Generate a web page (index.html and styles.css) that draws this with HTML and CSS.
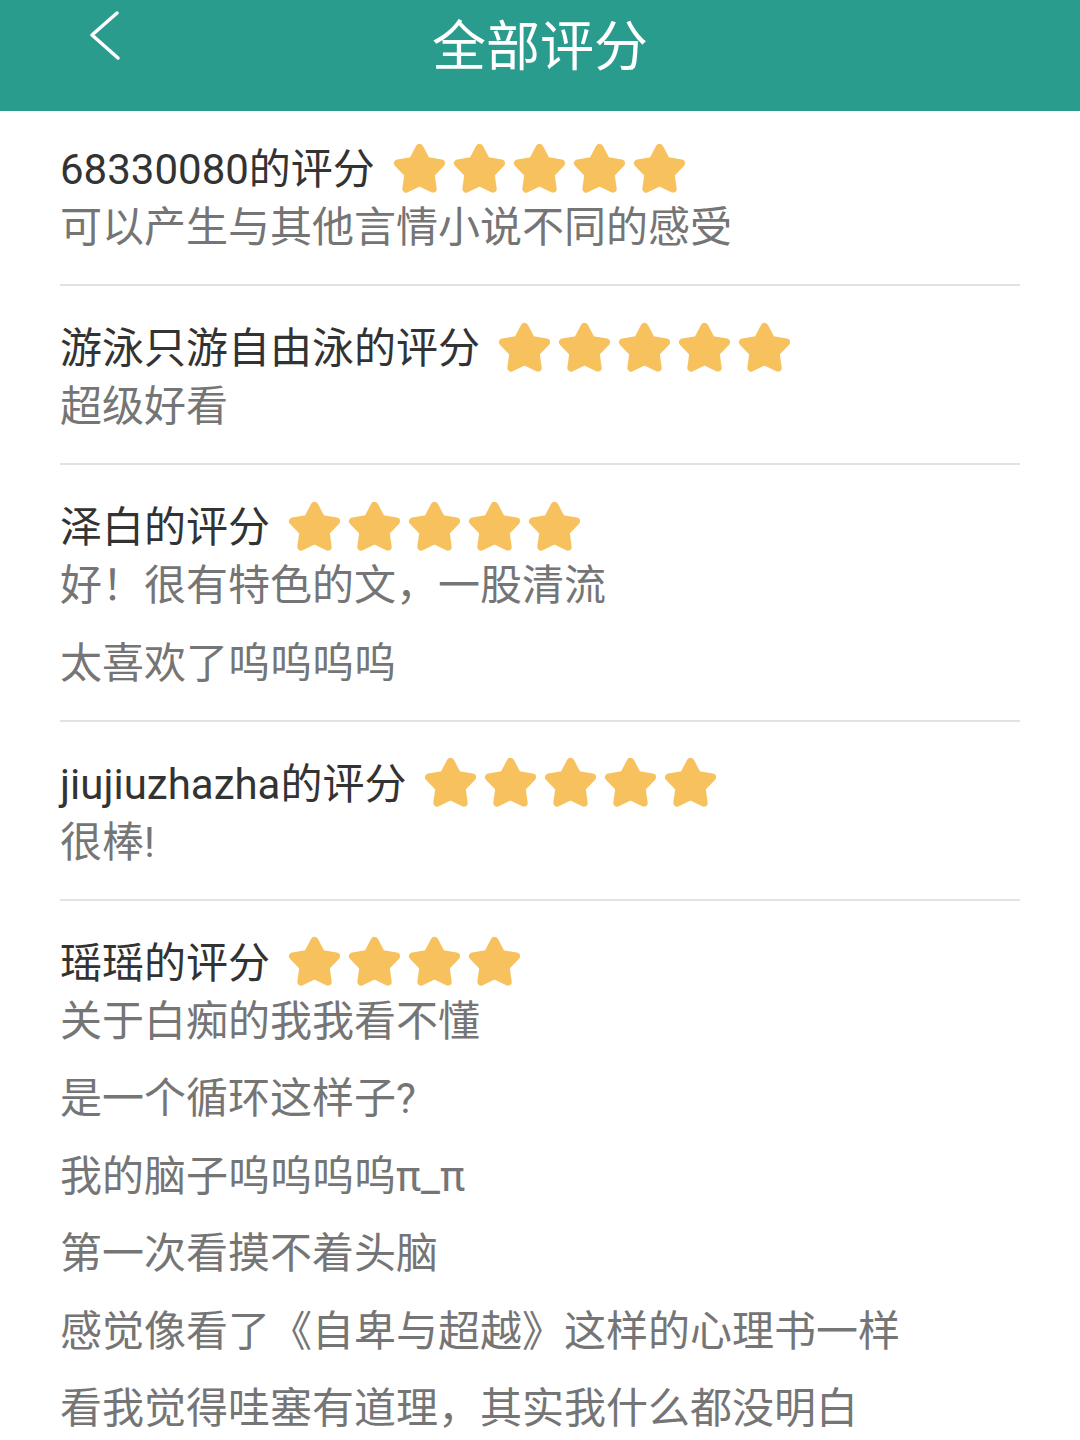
FILE: index.html
```html
<!DOCTYPE html>
<html lang="zh-CN">
<head>
    <meta charset="UTF-8">
    <meta name="viewport" content="width=device-width, initial-scale=1.0">
    <title>全部评分</title>
    <link rel="stylesheet" href="styles.css">
</head>
<body>
    <div class="topbar">
        <div class="topbar-row">
            <div class="back">
                <svg width="40" height="60" viewBox="0 0 40 60">
                    <polyline points="33,7 8,29 34,52" fill="none" stroke="#fff" stroke-width="3.5" stroke-linecap="round" stroke-linejoin="round"/>
                </svg>
            </div>
            <h1>全部评分</h1>
            <div></div>
        </div>
    </div>

    <svg width="0" height="0" class="defs">
        <defs>
            <polygon id="star" points="12,3.2 14.94,8.75 21.13,9.83 16.76,14.35 17.64,20.57 12,17.8 6.36,20.57 7.24,14.35 2.87,9.83 9.06,8.75" fill="#f7c25e" stroke="#f7c25e" stroke-width="3.2" stroke-linejoin="round"/>
        </defs>
    </svg>

    <div class="lista">
        <div class="item">
            <div class="cabecalho">
                <span class="nome">68330080的评分</span>
                <span class="estrelas">
                    <svg viewBox="0 0 24 24"><use href="#star"/></svg>
                    <svg viewBox="0 0 24 24"><use href="#star"/></svg>
                    <svg viewBox="0 0 24 24"><use href="#star"/></svg>
                    <svg viewBox="0 0 24 24"><use href="#star"/></svg>
                    <svg viewBox="0 0 24 24"><use href="#star"/></svg>
                </span>
            </div>
            <p class="texto">可以产生与其他言情小说不同的感受</p>
        </div>

        <div class="item">
            <div class="cabecalho">
                <span class="nome">游泳只游自由泳的评分</span>
                <span class="estrelas">
                    <svg viewBox="0 0 24 24"><use href="#star"/></svg>
                    <svg viewBox="0 0 24 24"><use href="#star"/></svg>
                    <svg viewBox="0 0 24 24"><use href="#star"/></svg>
                    <svg viewBox="0 0 24 24"><use href="#star"/></svg>
                    <svg viewBox="0 0 24 24"><use href="#star"/></svg>
                </span>
            </div>
            <p class="texto">超级好看</p>
        </div>

        <div class="item">
            <div class="cabecalho">
                <span class="nome">泽白的评分</span>
                <span class="estrelas">
                    <svg viewBox="0 0 24 24"><use href="#star"/></svg>
                    <svg viewBox="0 0 24 24"><use href="#star"/></svg>
                    <svg viewBox="0 0 24 24"><use href="#star"/></svg>
                    <svg viewBox="0 0 24 24"><use href="#star"/></svg>
                    <svg viewBox="0 0 24 24"><use href="#star"/></svg>
                </span>
            </div>
            <p class="texto">好！很有特色的文，一股清流</p>
            <p class="texto">太喜欢了呜呜呜呜</p>
        </div>

        <div class="item">
            <div class="cabecalho">
                <span class="nome">jiujiuzhazha的评分</span>
                <span class="estrelas">
                    <svg viewBox="0 0 24 24"><use href="#star"/></svg>
                    <svg viewBox="0 0 24 24"><use href="#star"/></svg>
                    <svg viewBox="0 0 24 24"><use href="#star"/></svg>
                    <svg viewBox="0 0 24 24"><use href="#star"/></svg>
                    <svg viewBox="0 0 24 24"><use href="#star"/></svg>
                </span>
            </div>
            <p class="texto">很棒!</p>
        </div>

        <div class="item">
            <div class="cabecalho">
                <span class="nome">瑶瑶的评分</span>
                <span class="estrelas">
                    <svg viewBox="0 0 24 24"><use href="#star"/></svg>
                    <svg viewBox="0 0 24 24"><use href="#star"/></svg>
                    <svg viewBox="0 0 24 24"><use href="#star"/></svg>
                    <svg viewBox="0 0 24 24"><use href="#star"/></svg>
                </span>
            </div>
            <p class="texto">关于白痴的我我看不懂</p>
            <p class="texto">是一个循环这样子?</p>
            <p class="texto">我的脑子呜呜呜呜π_π</p>
            <p class="texto">第一次看摸不着头脑</p>
            <p class="texto">感觉像看了《自卑与超越》这样的心理书一样</p>
            <p class="texto">看我觉得哇塞有道理，其实我什么都没明白</p>
        </div>
    </div>
</body>
</html>
```

FILE: styles.css
```css
body {
    font-family: Roboto, "Noto Sans CJK SC", sans-serif;
    background-color: #fff;
    margin: 0;
    overflow: hidden;
}
.defs {
    position: absolute;
}
.topbar {
    background-color: #2a9c8e;
    height: 111px;
}
.topbar-row {
    display: grid;
    grid-template-columns: 1fr auto 1fr;
    align-items: center;
    height: 84px;
}
.back {
    padding-left: 84px;
    align-self: start;
    padding-top: 6px;
}
.back svg {
    display: block;
}
h1 {
    margin: 6px 0 0;
    font-size: 54px;
    font-weight: 400;
    color: #fff;
    line-height: 84px;
}
.lista {
    margin: 0 60px;
}
.item {
    padding: 34px 0 27px;
    border-bottom: 2px solid #e2e2e2;
}
.item:first-child {
    padding-top: 30px;
}
.cabecalho {
    display: flex;
    align-items: center;
    gap: 16px;
    height: 58px;
}
.nome {
    font-size: 42px;
    line-height: 58px;
    color: #333;
    white-space: nowrap;
}
.estrelas {
    display: flex;
    gap: 3px;
    margin-top: -4px;
}
.estrelas svg {
    width: 57px;
    height: 57px;
    display: block;
}
.texto {
    margin: 19.5px 0 0;
    font-size: 42px;
    line-height: 58px;
    color: #757575;
}
.cabecalho + .texto {
    margin-top: 0;
}
```
